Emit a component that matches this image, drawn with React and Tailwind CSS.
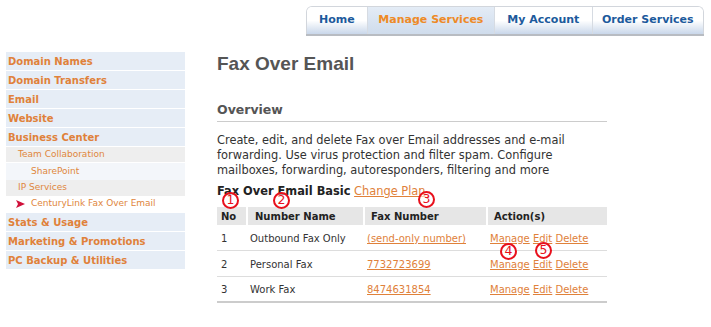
import React from 'react'

const font = { fontFamily: '"DejaVu Sans", Verdana, sans-serif' }

const tabs = [
  { label: 'Home', w: 'w-[60px]' },
  { label: 'Manage Services', w: 'w-[128px]', active: true },
  { label: 'My Account', w: 'w-[98px]' },
  { label: 'Order Services', w: 'w-[112px]' },
]

const menuTop = ['Domain Names', 'Domain Transfers', 'Email', 'Website', 'Business Center']
const menuBottom = ['Stats & Usage', 'Marketing & Promotions', 'PC Backup & Utilities']

const rows = [
  { no: 1, name: 'Outbound Fax Only', fax: '(send-only number)' },
  { no: 2, name: 'Personal Fax', fax: '7732723699' },
  { no: 3, name: 'Work Fax', fax: '8474631854' },
]

function Marker({ n, className }) {
  return (
    <div
      className={`absolute w-[17px] h-[17px] rounded-full border-[2.5px] border-[#e8101c] bg-white/60 flex items-center justify-center text-[12.5px] leading-none text-[#e8101c] ${className}`}
      style={font}
    >
      {n}
    </div>
  )
}

function TopItem({ label }) {
  return (
    <div className="h-[19px] bg-[#e6edf6] border-b border-white pl-[2px] pt-[1px] flex items-center text-[10px] font-bold text-[#e0813a]">
      {label}
    </div>
  )
}

function SubItem({ children, className }) {
  return (
    <div className={`flex items-center text-[9px] text-[#e0863c] ${className}`}>{children}</div>
  )
}

export default function App() {
  return (
    <div className="w-[711px] h-[327px] bg-white relative overflow-hidden" style={font}>
      {/* Tabs */}
      <div className="pt-[6px] pl-[306px]">
        <div className="flex w-[398px] h-[28px] border-t border-x border-[#d2d6dc] rounded-t-[6px] overflow-hidden shadow-[0_2px_0_#b8bcc2]">
          {tabs.map((t, i) => (
            <div
              key={t.label}
              className={`${t.w} h-full flex items-center justify-center text-[11px] font-bold ${i > 0 ? 'border-l border-[#d6dbe2]' : ''} ${
                t.active
                  ? 'bg-gradient-to-b from-[#e4ecf6] to-[#cfdcec] text-[#ee8a26]'
                  : 'bg-gradient-to-b from-white via-white to-[#c9d7ea] text-[#1c5a9c]'
              }`}
            >
              {t.label}
            </div>
          ))}
        </div>
      </div>

      <div className="flex mt-[18px]">
        {/* Sidebar */}
        <div className="ml-[6px] w-[179px] shrink-0">
          {menuTop.map((m) => (
            <TopItem key={m} label={m} />
          ))}
          <SubItem className="h-[16px] bg-[#eeeeee] border-b border-white pl-[12px]">Team Collaboration</SubItem>
          <SubItem className="h-[17px] bg-[#f3f6fa] pl-[25px]">SharePoint</SubItem>
          <SubItem className="h-[16px] bg-[#eeeeee] pl-[12px]">IP Services</SubItem>
          <SubItem className="h-[17px] bg-white border-b border-white pl-[10px]">
            <svg width="9" height="8" viewBox="0 0 9 8" className="mr-[6px]">
              <path d="M0 0 L9 4 L0 8 L2 4 Z" fill="#d0103a" />
            </svg>
            CenturyLink Fax Over Email
          </SubItem>
          {menuBottom.map((m) => (
            <TopItem key={m} label={m} />
          ))}
        </div>

        {/* Main */}
        <div className="ml-[32px] w-[390px] relative">
          <h1
            className="text-[19px] font-bold text-[#555555] leading-[22px] mt-[1px]"
            style={{ fontFamily: '"Liberation Sans", Arial, sans-serif' }}
          >
            Fax Over Email
          </h1>
          <h2 className="mt-[27px] text-[12.5px] font-bold text-[#555555] leading-[16px] pb-[3px] border-b border-[#cccccc]">
            Overview
          </h2>
          <p className="mt-[11px] text-[11.4px] leading-[15px] text-[#333333]">
            Create, edit, and delete Fax over Email addresses and e-mail forwarding. Use virus protection and filter spam. Configure mailboxes, forwarding, autoresponders, filtering and more
          </p>
          <div className="mt-[5px] text-[11.4px] leading-[16px] text-[#222222]">
            <span className="font-bold">Fax Over Email Basic</span>{' '}
            <a className="underline text-[#e0813a]">Change Plan</a>
          </div>

          <table className="mt-[8px] w-full border-collapse text-[10px] text-[#333333] border-b-2 border-[#cccccc]">
            <thead>
              <tr className="h-[18px] font-bold text-[#222222]">
                <th className="w-[30px] bg-[#e6e6e6] border-r-2 border-white text-left pl-[4px]">No</th>
                <th className="w-[117px] bg-[#e6e6e6] border-r-2 border-white text-left pl-[7px]">Number Name</th>
                <th className="w-[123px] bg-[#e6e6e6] border-r-2 border-white text-left pl-[6px]">Fax Number</th>
                <th className="bg-[#e6e6e6] text-left pl-[6px]">Action(s)</th>
              </tr>
            </thead>
            <tbody>
              {rows.map((r, i) => (
                <tr key={r.no} className={`h-[25.5px] ${i < rows.length - 1 ? 'border-b border-[#dddddd]' : ''}`}>
                  <td className="pl-[4px] pt-[2px]">{r.no}</td>
                  <td className="pl-[3px] pt-[2px]">{r.name}</td>
                  <td className="pl-[3px] pt-[2px]">
                    <a className="underline text-[#e0813a]">{r.fax}</a>
                  </td>
                  <td className="pl-[3px] pt-[2px] text-[#e0813a]">
                    <a className="underline">Manage</a> <a className="underline">Edit</a>{' '}
                    <a className="underline">Delete</a>
                  </td>
                </tr>
              ))}
            </tbody>
          </table>

          <Marker n="1" className="left-[5px] top-[140px]" />
          <Marker n="2" className="left-[56px] top-[140px]" />
          <Marker n="3" className="left-[201px] top-[139px]" />
          <Marker n="4" className="left-[283px] top-[191px]" />
          <Marker n="5" className="left-[318px] top-[190px]" />
        </div>
      </div>
    </div>
  )
}
